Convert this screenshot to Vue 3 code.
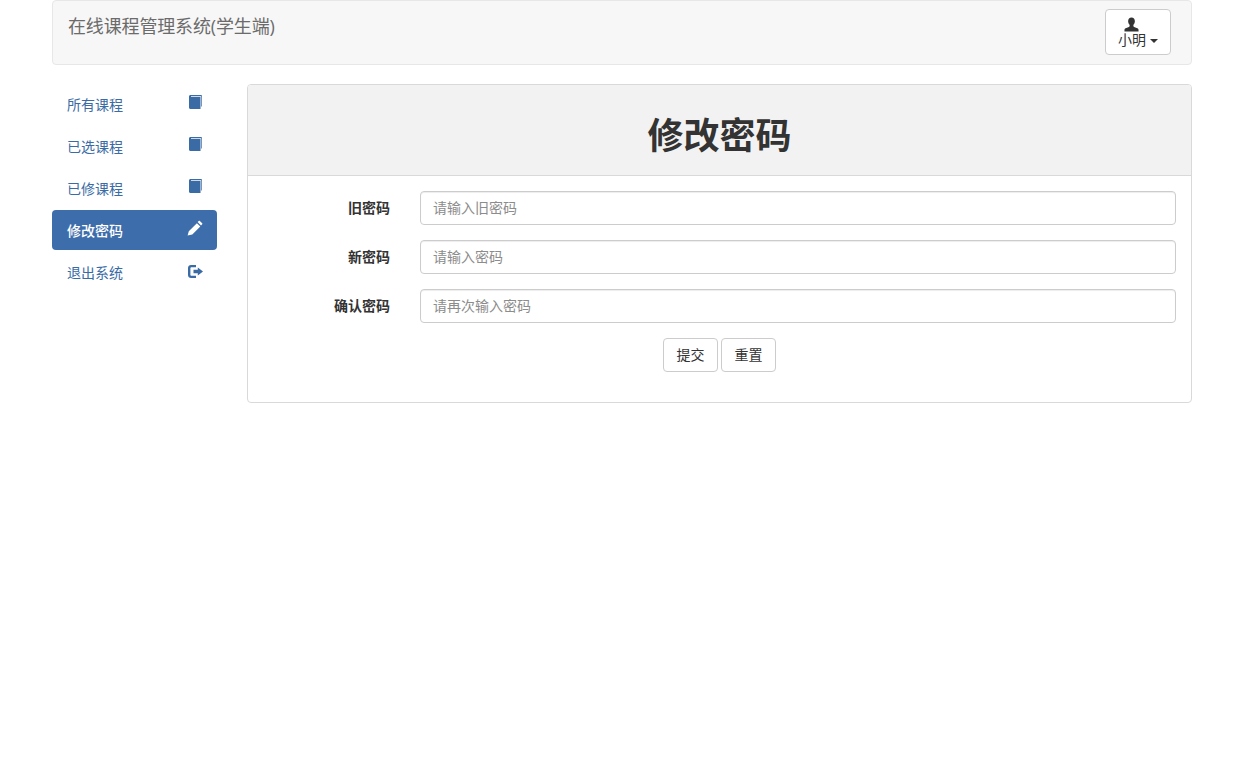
<script setup>
import { ref } from 'vue'

const navItems = [
  { label: '所有课程', icon: 'book' },
  { label: '已选课程', icon: 'book' },
  { label: '已修课程', icon: 'book' },
  { label: '修改密码', icon: 'pencil', active: true },
  { label: '退出系统', icon: 'logout' },
]

const fields = [
  { label: '旧密码', placeholder: '请输入旧密码', key: 'oldPwd' },
  { label: '新密码', placeholder: '请输入密码', key: 'newPwd' },
  { label: '确认密码', placeholder: '请再次输入密码', key: 'confirmPwd' },
]

const form = ref({ oldPwd: '', newPwd: '', confirmPwd: '' })

function resetForm() {
  form.value = { oldPwd: '', newPwd: '', confirmPwd: '' }
}
</script>

<template>
  <div class="container">
    <nav class="navbar">
      <span class="brand">在线课程管理系统(学生端)</span>
      <button class="user-btn" type="button">
        <svg class="user-icon" viewBox="0 0 16 16" width="15" height="15">
          <path fill="currentColor" d="M8 0.5c2.200 0 3.600 1.700 3.600 3.900 0 1.600-.7 3-1.600 3.900v1.300c0 .5.3.8.8 1l3.400 1.500c1 .4 1.300 1 1.300 2v1.400H.5v-1.400c0-1 .3-1.600 1.300-2l3.400-1.500c.5-.2.8-.5.8-1V8.300c-.9-.9-1.600-2.300-1.600-3.900C4.400 2.200 5.800.5 8 .5z" />
        </svg>
        <span class="user-name">小明 <i class="caret"></i></span>
      </button>
    </nav>

    <div class="main">
      <ul class="side-nav">
        <li v-for="item in navItems" :key="item.label" :class="[item.icon, { active: item.active }]">
          <span>{{ item.label }}</span>
          <svg v-if="item.icon === 'book'" class="icon" viewBox="0 0 13 14" width="13" height="14">
            <path fill="currentColor" d="M1.500 0H11.800C12.500 0 13 .5 13 1.200V11.500H12.300V1.200H2V1.900H11.500V14H1.500C.7 14 0 13.300 0 12.500V1.500C0 .7.7 0 1.500 0z" />
          </svg>
          <svg v-else-if="item.icon === 'pencil'" class="icon" viewBox="0 0 16 16" width="16" height="16">
            <path fill="currentColor" d="M12.800.9l2.400 2.400c.3.3.3.7 0 1l-1.200 1.200-3.400-3.400L11.800.9c.3-.3.7-.3 1 0zM9.900 3.200l3.400 3.400-8 8L.6 15.600l1.200-4.300z" />
          </svg>
          <svg v-else class="icon" viewBox="0 0 15 13" width="15" height="13">
            <path fill="currentColor" d="M3 0H8V2.200H3.500C2.800 2.200 2.400 2.700 2.400 3.300V9.700C2.400 10.300 2.800 10.800 3.500 10.800H8V13H3C1.300 13 0 11.700 0 10V3C0 1.300 1.300 0 3 0zM9.800 2.600L15 6.500 9.800 10.400V8.200H5.500V4.800H9.800z" />
          </svg>
        </li>
      </ul>

      <section class="panel">
        <header class="panel-heading">
          <h1>修改密码</h1>
        </header>
        <form class="panel-body" @submit.prevent>
          <div v-for="f in fields" :key="f.key" class="form-row">
            <label :for="f.key">{{ f.label }}</label>
            <input :id="f.key" v-model="form[f.key]" type="password" :placeholder="f.placeholder" />
          </div>
          <div class="actions">
            <button type="submit" class="btn">提交</button>
            <button type="button" class="btn" @click="resetForm">重置</button>
          </div>
        </form>
      </section>
    </div>
  </div>
</template>

<style scoped>
.container {
  width: 1140px;
  margin: 0 auto;
  font-family: "Liberation Sans", "Noto Sans CJK SC", sans-serif;
  font-size: 14px;
  line-height: 20px;
  color: #333;
}
.navbar {
  display: flex;
  justify-content: space-between;
  align-items: flex-start;
  height: 65px;
  box-sizing: border-box;
  padding: 8px 20px 0 15px;
  background: #f7f7f7;
  border: 1px solid #e7e7e7;
  border-radius: 4px;
}
.brand {
  font-family: "Open Sans", "Noto Sans CJK SC", sans-serif;
  font-size: 18px;
  line-height: 34px;
  letter-spacing: -0.15px;
  color: #6b6b6b;
}
.user-btn {
  display: flex;
  flex-direction: column;
  align-items: flex-start;
  width: 66px;
  height: 46px;
  padding: 7px 0 0 12px;
  background: #fff;
  border: 1px solid #ccc;
  border-radius: 4px;
  color: #333;
  font: inherit;
}
.user-icon {
  display: block;
  height: 15px;
  margin-left: 6px;
}
.user-name {
  line-height: 20px;
  margin-top: -2px;
}
.caret {
  display: inline-block;
  width: 0;
  height: 0;
  vertical-align: middle;
  border-top: 4px solid #333;
  border-left: 4px solid transparent;
  border-right: 4px solid transparent;
}
.main {
  display: flex;
  gap: 30px;
  align-items: flex-start;
  margin-top: 19px;
}
.side-nav {
  width: 165px;
  flex: none;
  margin: 0;
  padding: 0;
  list-style: none;
  display: flex;
  flex-direction: column;
  gap: 2px;
}
.side-nav li {
  display: flex;
  justify-content: space-between;
  align-items: flex-start;
  height: 40px;
  box-sizing: border-box;
  padding: 11px 15px 0;
  border-radius: 4px;
  color: #3a6ba5;
}
.side-nav li.active {
  background: #3e6dab;
  color: #fff;
  font-weight: 500;
}
.side-nav .icon {
  display: block;
}
.side-nav li.pencil .icon {
  margin-top: -1px;
  margin-right: -1px;
}
.side-nav li.logout .icon {
  margin-top: 2px;
  margin-right: -1px;
}
.panel {
  flex: 1;
  height: 319px;
  box-sizing: border-box;
  background: #fff;
  border: 1px solid #d9d9d9;
  border-radius: 4px;
  overflow: hidden;
}
.panel-heading {
  height: 91px;
  box-sizing: border-box;
  background: #f2f2f2;
  border-bottom: 1px solid #d9d9d9;
  text-align: center;
  padding-top: 22px;
}
.panel-heading h1 {
  margin: 0;
  font-size: 36px;
  line-height: 60px;
  font-weight: 700;
  color: #333;
}
.panel-body {
  padding: 15px;
  display: flex;
  flex-direction: column;
  gap: 15px;
}
.form-row {
  display: flex;
  align-items: center;
  gap: 30px;
}
.form-row label {
  width: 127px;
  flex: none;
  text-align: right;
  font-weight: 700;
}
.form-row input {
  flex: 1;
  height: 34px;
  box-sizing: border-box;
  padding: 6px 12px;
  border: 1px solid #ccc;
  border-radius: 4px;
  font: inherit;
  color: #555;
  box-shadow: inset 0 1px 1px rgba(0, 0, 0, 0.075);
  outline: none;
}
.form-row input::placeholder {
  color: #8c8c8c;
}
.actions {
  display: flex;
  justify-content: center;
  gap: 3px;
}
.btn {
  width: 55px;
  height: 34px;
  padding: 6px 0;
  background: #fff;
  border: 1px solid #ccc;
  border-radius: 4px;
  color: #333;
  font: inherit;
}
</style>

<style>
html, body {
  background: #fff;
}
</style>
